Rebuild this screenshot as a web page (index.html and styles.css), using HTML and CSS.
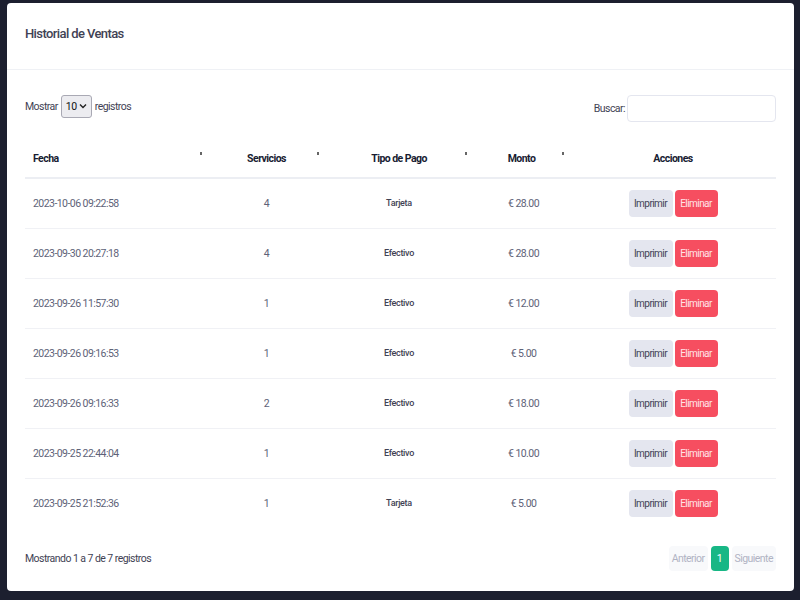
FILE: index.html
```html
<!DOCTYPE html>
<html lang="es">
<head>
<meta charset="utf-8">
<title>Historial de Ventas</title>
<link rel="stylesheet" href="styles.css">
</head>
<body>
<div class="card">
  <div class="card-header">
    <h3 class="card-title">Historial de Ventas</h3>
  </div>
  <div class="card-body">
    <div class="controls">
      <label class="length">Mostrar
        <span class="select">10 <svg width="8" height="6" viewBox="0 0 8 6"><path d="M1 1.5 L4 4.5 L7 1.5" fill="none" stroke="#222" stroke-width="1.4"/></svg></span>
        registros</label>
      <label class="search">Buscar: <span class="search-input"></span></label>
    </div>
    <table class="table">
      <thead>
        <tr>
          <th class="c-fecha sort">Fecha</th>
          <th class="c-serv sort">Servicios</th>
          <th class="c-tipo sort">Tipo de Pago</th>
          <th class="c-monto sort">Monto</th>
          <th class="c-acc">Acciones</th>
        </tr>
      </thead>
      <tbody>
        <tr><td class="c-fecha">2023-10-06 09:22:58</td><td class="c-serv">4</td><td class="c-tipo">Tarjeta</td><td class="c-monto">€ 28.00</td><td class="c-acc"><span class="btn btn-light">Imprimir</span><span class="btn btn-danger">Eliminar</span></td></tr>
        <tr><td class="c-fecha">2023-09-30 20:27:18</td><td class="c-serv">4</td><td class="c-tipo">Efectivo</td><td class="c-monto">€ 28.00</td><td class="c-acc"><span class="btn btn-light">Imprimir</span><span class="btn btn-danger">Eliminar</span></td></tr>
        <tr><td class="c-fecha">2023-09-26 11:57:30</td><td class="c-serv">1</td><td class="c-tipo">Efectivo</td><td class="c-monto">€ 12.00</td><td class="c-acc"><span class="btn btn-light">Imprimir</span><span class="btn btn-danger">Eliminar</span></td></tr>
        <tr><td class="c-fecha">2023-09-26 09:16:53</td><td class="c-serv">1</td><td class="c-tipo">Efectivo</td><td class="c-monto">€ 5.00</td><td class="c-acc"><span class="btn btn-light">Imprimir</span><span class="btn btn-danger">Eliminar</span></td></tr>
        <tr><td class="c-fecha">2023-09-26 09:16:33</td><td class="c-serv">2</td><td class="c-tipo">Efectivo</td><td class="c-monto">€ 18.00</td><td class="c-acc"><span class="btn btn-light">Imprimir</span><span class="btn btn-danger">Eliminar</span></td></tr>
        <tr><td class="c-fecha">2023-09-25 22:44:04</td><td class="c-serv">1</td><td class="c-tipo">Efectivo</td><td class="c-monto">€ 10.00</td><td class="c-acc"><span class="btn btn-light">Imprimir</span><span class="btn btn-danger">Eliminar</span></td></tr>
        <tr class="last"><td class="c-fecha">2023-09-25 21:52:36</td><td class="c-serv">1</td><td class="c-tipo">Tarjeta</td><td class="c-monto">€ 5.00</td><td class="c-acc"><span class="btn btn-light">Imprimir</span><span class="btn btn-danger">Eliminar</span></td></tr>
      </tbody>
    </table>
    <div class="footer">
      <div class="info">Mostrando 1 a 7 de 7 registros</div>
      <div class="pagination">
        <span class="page disabled">Anterior</span>
        <span class="page active">1</span>
        <span class="page disabled">Siguiente</span>
      </div>
    </div>
  </div>
</div>
</body>
</html>
```
FILE: styles.css
```css
* { box-sizing: border-box; }
html, body { height: 100%; }
body {
  margin: 0;
  background: #1c1f2f;
  padding: 3px 6px 9px 7px;
  font-family: "Roboto", "Liberation Sans", sans-serif;
  color: #5e6278;
  font-size: 10.5px;
  letter-spacing: -0.55px;
}
.card {
  background: #fff;
  border-radius: 4px;
  height: 588px;
  display: flex;
  flex-direction: column;
}
.card-header {
  height: 67px;
  border-bottom: 1px solid #eff1f5;
  padding: 0 18px 6px;
  display: flex;
  align-items: center;
}
.card-title {
  margin: 0;
  font-size: 13px;
  font-weight: 500;
  letter-spacing: -0.6px;
  color: #3f4254;
}
.card-body {
  padding: 25px 18px 0;
  flex: 1;
  display: flex;
  flex-direction: column;
}
.controls {
  display: flex;
  justify-content: space-between;
  align-items: flex-start;
  height: 45px;
}
.length {
  display: flex;
  align-items: center;
  gap: 1px;
  color: #3f4254;
  height: 22px;
}
.select {
  display: inline-flex;
  align-items: center;
  justify-content: space-between;
  width: 31px;
  height: 23px;
  padding: 0 4px 0 4px;
  border: 1px solid #a9a9b4;
  border-radius: 3px;
  background: #ececf0;
  color: #111;
  margin: 0 2px;
}
.search {
  display: flex;
  align-items: center;
  gap: 2px;
  color: #3f4254;
}
.search-input {
  display: block;
  width: 149px;
  height: 27px;
  border: 1px solid #e4e6ef;
  border-radius: 4px;
}
.table {
  width: 751px;
  border-collapse: collapse;
  table-layout: fixed;
}
.table th {
  height: 38px;
  padding: 0 8px 0;
  font-weight: 700;
  font-size: 10.5px;
  color: #181c32;
  border-bottom: 2px solid #eceef3;
  position: relative;
}
.table td {
  height: 50px;
  padding: 0 8px;
  border-bottom: 1px solid #f0f1f5;
}
.table tr.last td { border-bottom: none; }
.sort::after {
  content: "";
  position: absolute;
  right: 6px;
  top: 12px;
  width: 2px;
  height: 3px;
  background: #666;
}
.c-fecha { width: 183px; text-align: left; }
.c-serv { width: 117px; text-align: center; }
.c-tipo { width: 148px; text-align: center; }
.c-monto { width: 97px; text-align: center; }
.c-acc { width: 206px; text-align: center; }
td.c-tipo { font-size: 9px; font-weight: 500; color: #3f4254; letter-spacing: -0.3px; }
td.c-monto { padding-left: 12px; }
.btn {
  display: inline-flex;
  align-items: center;
  justify-content: center;
  height: 27px;
  padding: 0 4px;
  border-radius: 4px;
  font-size: 10px;
  vertical-align: middle;
}
.btn-light { background: #e4e6ef; color: #3f4254; width: 44px; margin-right: 2px; }
.btn-danger { background: #f64e60; color: #ffe3e8; width: 43px; }
.footer {
  display: flex;
  justify-content: space-between;
  align-items: center;
  margin-top: 18px;
}
.info { color: #3f4254; }
.pagination { display: flex; gap: 3px; }
.page {
  display: inline-flex;
  align-items: center;
  justify-content: center;
  height: 25px;
  border-radius: 4px;
  padding: 0 3px;
}
.page.disabled { background: #f8f9fb; color: #b0b3c3; }
.page.active { background: #18b785; color: #fff; width: 18px; }
```
